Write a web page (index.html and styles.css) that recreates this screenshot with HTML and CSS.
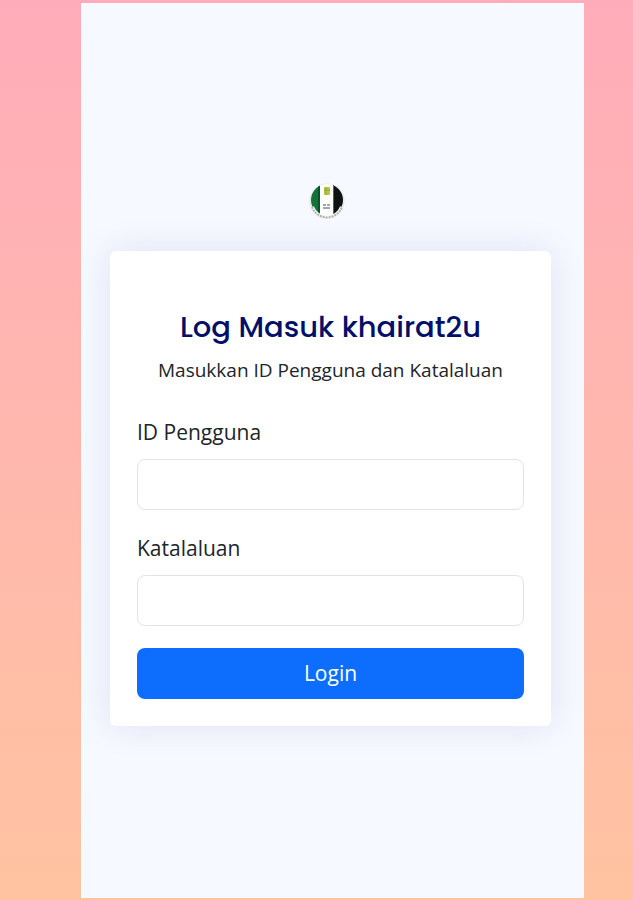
FILE: index.html
```html
<!DOCTYPE html>
<html lang="ms">
<head>
    <meta charset="utf-8">
    <meta name="viewport" content="width=device-width, initial-scale=1">
    <title>Log Masuk khairat2u</title>
    <link rel="stylesheet" href="styles.css">
</head>
<body>
    <main class="panel">
        <a class="logo" href="#" aria-label="khairat2u">
            <svg width="36" height="36" viewBox="0 0 36 36" aria-hidden="true">
                <defs>
                    <clipPath id="disc"><circle cx="18" cy="17" r="16"/></clipPath>
                </defs>
                <circle cx="18" cy="18" r="17" fill="#f5f6f6" stroke="#dfe2e4"/>
                <g clip-path="url(#disc)">
                    <rect width="36" height="36" fill="#fdfdfd"/>
                    <rect width="11" height="36" fill="#13713a"/>
                    <rect x="9" width="2" height="36" fill="#0b5028"/>
                    <rect x="24" width="12" height="36" fill="#101312"/>
                    <rect x="24" width="1" height="36" fill="#59605d"/>
                </g>
                <!-- lettering round the lower rim -->
                <path d="M3 24a16 16 0 0 0 30 0" fill="none" stroke="#f4f5f5" stroke-width="4"/>
                <path d="M3 24a16 16 0 0 0 30 0" fill="none" stroke="#aeb1b0" stroke-width="2" stroke-dasharray="2 1"/>
                <rect x="15" y="4" width="6" height="8" rx="1" fill="#b5c943"/>
                <path d="M15 7h6M17 4v8" stroke="#8fa63c" fill="none"/>
                <path d="M14 22h3M18 22h3M14 25h7" stroke="#a0a6a3" stroke-width="2" fill="none"/>
            </svg>
        </a>

        <div class="card">
            <h1 class="card-title">Log Masuk khairat2u</h1>
            <p class="card-text">Masukkan ID Pengguna dan Katalaluan</p>

            <form class="login-form">
                <div class="field">
                    <label for="username">ID Pengguna</label>
                    <input type="text" id="username" name="username" class="form-control">
                </div>
                <div class="field">
                    <label for="password">Katalaluan</label>
                    <input type="password" id="password" name="password" class="form-control">
                </div>
                <button type="submit" class="btn">Login</button>
            </form>
        </div>
    </main>
</body>
</html>
```
FILE: styles.css
```css
* {
    box-sizing: border-box;
}
body {
    margin: 0;
    min-height: 100vh;
    padding: 3px 49px 2px 81px;
    display: flex;
    background: linear-gradient(#ffacba, #ffc3a0);
    font-family: "Open Sans", "Noto Sans", sans-serif;
    color: #212529;
}
.panel {
    flex: 1;
    display: flex;
    flex-direction: column;
    justify-content: center;
    padding: 36px 33px 29px 29px;
    background: #f6f9ff;
}
.logo {
    align-self: center;
    margin-right: 7px;
    margin-bottom: 32px;
}
.logo svg {
    display: block;
}
.card {
    padding: 54px 27px 27px;
    border-radius: 6px;
    background: #fff;
    box-shadow: 0 0 36px rgba(30, 30, 130, 0.1);
}
.card-title {
    margin: 0;
    font-family: Poppins, Inter, sans-serif;
    font-size: 29px;
    font-weight: 500;
    line-height: 44px;
    text-align: center;
    color: #010f68;
}
.card-text {
    margin: 7px 0 32px;
    font-size: 19px;
    line-height: 28px;
    text-align: center;
}
.login-form {
    display: flex;
    flex-direction: column;
    gap: 22px;
}
.field {
    display: flex;
    flex-direction: column;
    gap: 11px;
}
.field label {
    font-size: 21px;
    line-height: 32px;
}
.form-control {
    width: 100%;
    height: 51px;
    padding: 8px 16px;
    border: 1px solid #e2e5e8;
    border-radius: 8px;
    background: #fff;
    color: inherit;
    font: inherit;
    font-size: 21px;
}
.btn {
    height: 51px;
    border: 0;
    border-radius: 8px;
    background: #0d6efd;
    color: #fff;
    font: inherit;
    font-size: 21px;
    cursor: pointer;
}
```
